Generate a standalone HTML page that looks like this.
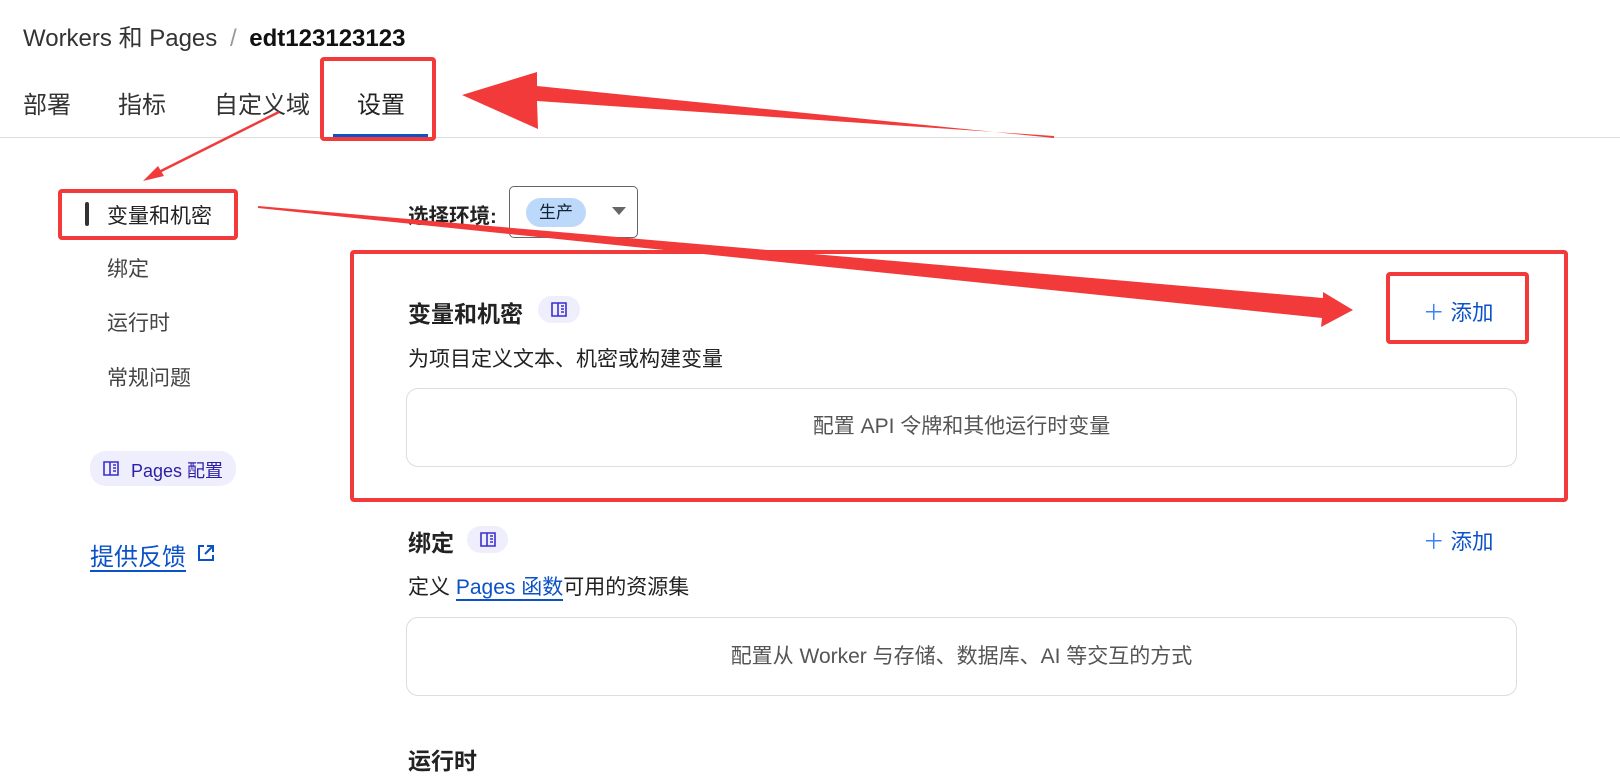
<!DOCTYPE html>
<html><head><meta charset="utf-8"><style>
*{margin:0;padding:0;box-sizing:border-box}
body{width:1620px;height:770px;overflow:hidden;background:#fff;font-family:"Liberation Sans","Noto Sans CJK SC",sans-serif;color:#222;position:relative}
.a{position:absolute;white-space:nowrap}
.red{position:absolute;border:4px solid #f23a3a;border-radius:4px}
.pill{position:absolute;background:#efeefc;border-radius:16px}
.card{position:absolute;border:1.5px solid #ddd;border-radius:12px;left:406px;width:1111px;text-align:center;color:#555;font-size:21px}
.blue{color:#0b52c8}
</style></head><body>
<div class="a" style="left:23px;top:18px;font-size:24px;color:#333">Workers 和 Pages <span style="color:#999;margin:0 6px">/</span> <b style="color:#111">edt123123123</b></div>
<div class="a" style="left:23px;top:85px;font-size:24px;color:#333">部署</div>
<div class="a" style="left:118px;top:85px;font-size:24px;color:#333">指标</div>
<div class="a" style="left:214px;top:85px;font-size:24px;color:#333">自定义域</div>
<div class="a" style="left:357px;top:85px;font-size:24px;color:#222">设置</div>
<div class="a" style="left:333px;top:134px;width:95px;height:3px;background:#0b52c8"></div>
<div class="a" style="left:0;top:137px;width:1620px;height:1px;background:#ddd"></div>
<div class="red" style="left:320px;top:57px;width:116px;height:84px"></div>

<div class="a" style="left:85px;top:202px;width:4px;height:24px;background:#333;border-radius:2px"></div>
<div class="a" style="left:107px;top:200px;font-size:21px">变量和机密</div>
<div class="red" style="left:58px;top:189px;width:180px;height:51px"></div>
<div class="a" style="left:107px;top:253px;font-size:21px;color:#444">绑定</div>
<div class="a" style="left:107px;top:307px;font-size:21px;color:#444">运行时</div>
<div class="a" style="left:107px;top:362px;font-size:21px;color:#444">常规问题</div>
<div class="pill" style="left:90px;top:451px;width:146px;height:35px"></div>
<svg class="a" style="left:103px;top:461px" width="16" height="15" viewBox="0 0 16 15" fill="none" stroke="#3b2fd0" stroke-width="1.6"><path d="M1 1h6v13H1zM7 1h8v13H7M10 4h3M10 7h3M10 10h3"/></svg>
<div class="a" style="left:131px;top:457px;font-size:18px;color:#2b1fa5">Pages 配置</div>
<div class="a blue" style="left:90px;top:537px;font-size:24px;text-decoration:underline;text-underline-offset:5px">提供反馈</div>
<svg class="a" style="left:196px;top:543px" width="20" height="20" viewBox="0 0 20 20" fill="none" stroke="#0b52c8" stroke-width="2"><path d="M8 3H3v14h14v-5M11 3h6v6M17 3l-8 8"/></svg>

<div class="a" style="left:408px;top:199px;font-size:20.5px;font-weight:bold">选择环境:</div>
<div class="a" style="left:509px;top:186px;width:129px;height:52px;border:1px solid #666;border-radius:5px"></div>
<div class="a" style="left:526px;top:198px;width:60px;height:29px;background:#bcd8fb;border-radius:15px;font-size:17px;color:#123;text-align:center;line-height:29px">生产</div>
<div class="a" style="left:612px;top:207px;width:0;height:0;border-left:7px solid transparent;border-right:7px solid transparent;border-top:8px solid #666"></div>

<div class="a" style="left:408px;top:295px;font-size:23px;font-weight:bold">变量和机密</div>
<div class="pill" style="left:538px;top:296px;width:42px;height:27px"></div>
<svg class="a" style="left:551px;top:302px" width="16" height="15" viewBox="0 0 16 15" fill="none" stroke="#3b2fd0" stroke-width="1.6"><path d="M1 1h6v13H1zM7 1h8v13H7M10 4h3M10 7h3M10 10h3"/></svg>
<div class="a" style="left:408px;top:343px;font-size:21px">为项目定义文本、机密或构建变量</div>
<div class="card" style="top:388px;height:79px;line-height:76px">配置 API 令牌和其他运行时变量</div>
<div class="a blue" style="left:1423px;top:296px;font-size:21.5px"><span style="color:#3b82f6">＋</span> 添加</div>
<div class="red" style="left:1386px;top:272px;width:143px;height:72px"></div>
<div class="red" style="left:350px;top:250px;width:1218px;height:252px"></div>

<div class="a" style="left:408px;top:524px;font-size:23px;font-weight:bold">绑定</div>
<div class="pill" style="left:467px;top:526px;width:41px;height:27px"></div>
<svg class="a" style="left:480px;top:532px" width="16" height="15" viewBox="0 0 16 15" fill="none" stroke="#3b2fd0" stroke-width="1.6"><path d="M1 1h6v13H1zM7 1h8v13H7M10 4h3M10 7h3M10 10h3"/></svg>
<div class="a blue" style="left:1423px;top:525px;font-size:21.5px"><span style="color:#3b82f6">＋</span> 添加</div>
<div class="a" style="left:408px;top:571px;font-size:21px">定义 <span class="blue" style="border-bottom:2px solid #0b52c8">Pages 函数</span>可用的资源集</div>
<div class="card" style="top:617px;height:79px;line-height:78px">配置从 Worker 与存储、数据库、AI 等交互的方式</div>
<div class="a" style="left:408px;top:742px;font-size:23px;font-weight:bold">运行时</div>

<svg class="a" style="left:0;top:0" width="1620" height="770">
<polygon fill="#f23a3a" points="1054,136 537,101 538,129 462,95 537,72 537,86 1054,138"/>
<line x1="279" y1="112" x2="155" y2="174" stroke="#f23a3a" stroke-width="2.5"/>
<polygon fill="#f23a3a" points="143,181 158,166 164,176"/>
<polygon fill="#f23a3a" points="258,206 1323,298 1323,292 1353,310 1321,327 1322,318 258,208"/>
</svg>
</body></html>
